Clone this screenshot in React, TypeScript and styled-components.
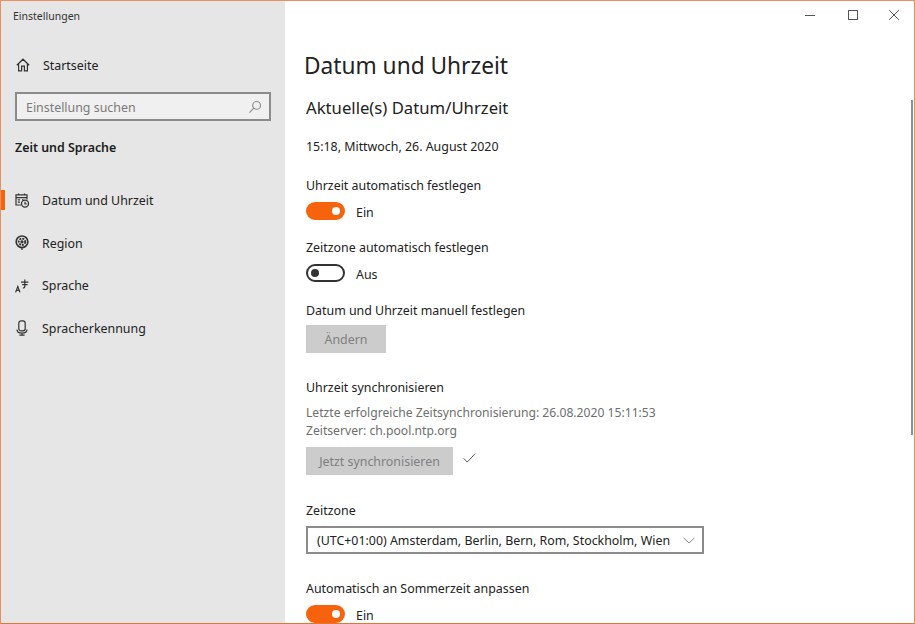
import React from "react";
import styled, { createGlobalStyle } from "styled-components";

const GlobalStyle = createGlobalStyle`
  html, body { margin: 0; padding: 0; background: #fff; }
  * { box-sizing: border-box; }
`;

const Window = styled.div`
  position: relative;
  width: 915px;
  height: 624px;
  display: flex;
  overflow: hidden;
  border: 1px solid #e8905f;
  border-bottom-color: #e2763a;
  font-family: "Noto Sans", "Open Sans", sans-serif;
  font-size: 12.4px;
  color: #222;
`;

const Sidebar = styled.aside`
  width: 284px;
  flex: none;
  background: #e6e6e6;
  display: flex;
  flex-direction: column;
`;

const AppTitle = styled.div`
  font-size: 10.5px;
  line-height: 14px;
  padding: 8px 0 0 12px;
  height: 30px;
  color: #333;
`;

const HomeRow = styled.div`
  display: flex;
  align-items: center;
  height: 20px;
  margin-top: 24px;
  padding-left: 15px;
  gap: 13px;
`;

const Search = styled.div`
  display: flex;
  align-items: center;
  justify-content: space-between;
  width: 256px;
  height: 29px;
  margin: 17px 0 0 14px;
  padding: 1px 7px 0 9px;
  background: #f0f0f0;
  border: 2px solid #8b8b8b;
  color: #7a7a7a;
`;

const SectionName = styled.div`
  margin: 18px 0 0 14px;
  font-weight: 600;
  line-height: 18px;
  color: #1c1c1c;
`;

const NavList = styled.nav`
  display: flex;
  flex-direction: column;
  margin-top: 22px;
`;

const NavItem = styled.div<{ $active?: boolean }>`
  display: flex;
  align-items: center;
  height: 42.7px;
  padding-left: 14px;
  gap: 13px;
  background-image: ${(p) =>
    p.$active ? "linear-gradient(#f7630c, #f7630c)" : "none"};
  background-repeat: no-repeat;
  background-size: 4px 20px;
  background-position: 0 center;
`;

const IconBox = styled.span`
  display: inline-flex;
  width: 14px;
  height: 16px;
  align-items: center;
  justify-content: center;
  flex: none;
  color: #333;
`;

const Main = styled.main`
  flex: 1;
  min-width: 0;
  background: #fff;
  display: flex;
  flex-direction: column;
`;

const TitleBar = styled.div`
  display: flex;
  flex: none;
  justify-content: flex-end;
  height: 30px;
`;

const WinButton = styled.span<{ $width: number }>`
  width: ${(p) => p.$width}px;
  height: 28px;
  display: flex;
  align-items: center;
  justify-content: center;
  color: #555;
`;

const Content = styled.div`
  padding: 0 0 0 21px;
  display: flex;
  flex-direction: column;
  align-items: flex-start;
`;

const PageTitle = styled.h1`
  margin: 18px 0 0 -2px;
  font-size: 22.7px;
  line-height: 34px;
  font-weight: 400;
  color: #222;
`;

const Subtitle = styled.h2`
  margin: 13px 0 0 0;
  font-size: 16.7px;
  line-height: 24px;
  font-weight: 400;
  color: #222;
`;

const Line = styled.div<{ $top: number; $muted?: boolean }>`
  margin-top: ${(p) => p.$top}px;
  line-height: 18px;
  white-space: nowrap;
  color: ${(p) => (p.$muted ? "#6e6e6e" : "#222")};
  font-size: ${(p) => (p.$muted ? "12.15px" : "inherit")};
`;

const ToggleRow = styled.div<{ $top: number }>`
  display: flex;
  align-items: center;
  gap: 11px;
  height: 20px;
  margin-top: ${(p) => p.$top}px;
`;

const Track = styled.span<{ $on: boolean }>`
  position: relative;
  width: 39px;
  height: 18px;
  margin-bottom: 2px;
  border-radius: 9px;
  background: ${(p) => (p.$on ? "#f7630c" : "#fff")};
  border: 2px solid ${(p) => (p.$on ? "#f7630c" : "#333")};
`;

const Knob = styled.span<{ $on: boolean }>`
  position: absolute;
  top: 3px;
  width: 8px;
  height: 8px;
  border-radius: 50%;
  background: ${(p) => (p.$on ? "#fff" : "#333")};
  ${(p) => (p.$on ? "right: 3px;" : "left: 3px;")}
`;

const GreyButton = styled.div<{ $width: number; $top: number }>`
  width: ${(p) => p.$width}px;
  height: 28px;
  margin-top: ${(p) => p.$top}px;
  background: #cccccc;
  color: #7f7f7f;
  display: flex;
  align-items: center;
  justify-content: center;
`;

const SyncRow = styled.div`
  display: flex;
  align-items: flex-start;
  gap: 10px;
`;

const CheckMark = styled.svg`
  margin-top: 13px;
`;

const Dropdown = styled.div`
  width: 398px;
  height: 28px;
  margin-top: 6px;
  display: flex;
  align-items: center;
  justify-content: space-between;
  padding: 0 7px 0 9px;
  border: 2px solid #8b8b8b;
  color: #222;
  white-space: nowrap;
`;

const ScrollThumb = styled.div`
  position: absolute;
  right: 1px;
  top: 99px;
  width: 2px;
  height: 335px;
  background: #8f8f8f;
`;

function Toggle({ on, top }: { on: boolean; top: number }) {
  return (
    <ToggleRow $top={top}>
      <Track $on={on}>
        <Knob $on={on} />
      </Track>
      <span>{on ? "Ein" : "Aus"}</span>
    </ToggleRow>
  );
}

const stroke = {
  fill: "none",
  stroke: "currentColor",
  strokeWidth: 1.2,
};

function HomeIcon() {
  return (
    <svg width="14" height="14" viewBox="0 0 14 14" {...stroke}>
      <path d="M.8 7.2 7 1.2 13.2 7.2M2.6 5.6V12.8H5.6V8.2H8.4V12.8H11.4V5.6" />
    </svg>
  );
}

function SearchIcon() {
  return (
    <svg width="14" height="14" viewBox="0 0 14 14" fill="none" stroke="#8a8a8a" strokeWidth="1.1">
      <circle cx="8.6" cy="5.4" r="3.9" />
      <path d="M5.8 8.2 1.5 12.6" />
    </svg>
  );
}

function CalendarIcon() {
  return (
    <svg width="14" height="15" viewBox="0 0 14 15" {...stroke}>
      <path d="M6 12H1V1.8H12V6.5M1 4.6H12M3.5.6V2.4M9.5.6V2.4M2.8 6.8H5M2.8 9.2H5M7 6.8H8.4" />
      <circle cx="10" cy="10.6" r="3.5" strokeWidth="1.3" />
      <path d="M10 8.8V10.8H11.6" />
    </svg>
  );
}

function RegionIcon() {
  return (
    <svg width="14" height="16" viewBox="0 0 14 16" {...stroke}>
      <circle cx="7" cy="6.8" r="5.8" strokeWidth="1.7" />
      <circle cx="7" cy="6.8" r="3.2" strokeWidth="1.8" strokeDasharray="2 1" />
      <circle cx="7" cy="6.8" r="1" fill="currentColor" />
      <path d="M7 12.6V15" />
    </svg>
  );
}

function LanguageIcon() {
  return (
    <svg width="14" height="14" viewBox="0 0 14 14" {...stroke}>
      <path d="M.6 13.4 2.8 7.4 5 13.4M1.3 11.4H4.3" />
      <path d="M6 3.2H13.4M9.8.6V7.2C9.8 8.6 8.8 9 7.8 9M7.2 5.6H12.6" />
    </svg>
  );
}

function MicIcon() {
  return (
    <svg width="12" height="16" viewBox="0 0 12 16" {...stroke}>
      <rect x="2.8" y=".8" width="6.4" height="10" rx="2.4" />
      <path d="M1 9.4C1 12 3 13 6 13S11 12 11 9.4M6 13V15.2M3.4 15.2H8.6" />
    </svg>
  );
}

function Chevron() {
  return (
    <svg width="12" height="7" viewBox="0 0 12 7" fill="none" stroke="#8a8a8a" strokeWidth="1">
      <path d="M.5.8 6 6 11.5.8" />
    </svg>
  );
}

export default function App() {
  return (
    <Window>
      <GlobalStyle />
      <Sidebar>
        <AppTitle>Einstellungen</AppTitle>
        <HomeRow>
          <IconBox>
            <HomeIcon />
          </IconBox>
          <span>Startseite</span>
        </HomeRow>
        <Search>
          <span>Einstellung suchen</span>
          <SearchIcon />
        </Search>
        <SectionName>Zeit und Sprache</SectionName>
        <NavList>
          <NavItem $active>
            <IconBox>
              <CalendarIcon />
            </IconBox>
            <span>Datum und Uhrzeit</span>
          </NavItem>
          <NavItem>
            <IconBox>
              <RegionIcon />
            </IconBox>
            <span>Region</span>
          </NavItem>
          <NavItem>
            <IconBox>
              <LanguageIcon />
            </IconBox>
            <span>Sprache</span>
          </NavItem>
          <NavItem>
            <IconBox>
              <MicIcon />
            </IconBox>
            <span>Spracherkennung</span>
          </NavItem>
        </NavList>
      </Sidebar>
      <Main>
        <TitleBar>
          <WinButton $width={44}>
            <svg width="10" height="10" viewBox="0 0 10 10" stroke="currentColor">
              <path d="M0 5.5H10" />
            </svg>
          </WinButton>
          <WinButton $width={42}>
            <svg width="10" height="10" viewBox="0 0 10 10" fill="none" stroke="currentColor">
              <rect x=".5" y=".5" width="9" height="9" />
            </svg>
          </WinButton>
          <WinButton $width={40}>
            <svg width="10" height="10" viewBox="0 0 10 10" fill="none" stroke="currentColor">
              <path d="M.2.2 9.8 9.8M9.8.2.2 9.8" />
            </svg>
          </WinButton>
        </TitleBar>
        <Content>
          <PageTitle>Datum und Uhrzeit</PageTitle>
          <Subtitle>Aktuelle(s) Datum/Uhrzeit</Subtitle>
          <Line $top={18}>15:18, Mittwoch, 26. August 2020</Line>
          <Line $top={21}>Uhrzeit automatisch festlegen</Line>
          <Toggle on top={7} />
          <Line $top={17}>Zeitzone automatisch festlegen</Line>
          <Toggle on={false} top={7} />
          <Line $top={18}>Datum und Uhrzeit manuell festlegen</Line>
          <GreyButton $width={80} $top={5}>
            Ändern
          </GreyButton>
          <Line $top={26}>Uhrzeit synchronisieren</Line>
          <Line $top={7} $muted>
            Letzte erfolgreiche Zeitsynchronisierung: 26.08.2020 15:11:53
          </Line>
          <Line $top={0} $muted>
            Zeitserver: ch.pool.ntp.org
          </Line>
          <SyncRow>
            <GreyButton $width={147} $top={7}>
              Jetzt synchronisieren
            </GreyButton>
            <CheckMark width="13" height="10" viewBox="0 0 14 11" fill="none" stroke="#444">
              <path d="M.7 6 4.5 10 13.3.7" />
            </CheckMark>
          </SyncRow>
          <Line $top={27}>Zeitzone</Line>
          <Dropdown>
            <span>(UTC+01:00) Amsterdam, Berlin, Bern, Rom, Stockholm, Wien</span>
            <Chevron />
          </Dropdown>
          <Line $top={26}>Automatisch an Sommerzeit anpassen</Line>
          <Toggle on top={7} />
        </Content>
      </Main>
      <ScrollThumb />
    </Window>
  );
}
